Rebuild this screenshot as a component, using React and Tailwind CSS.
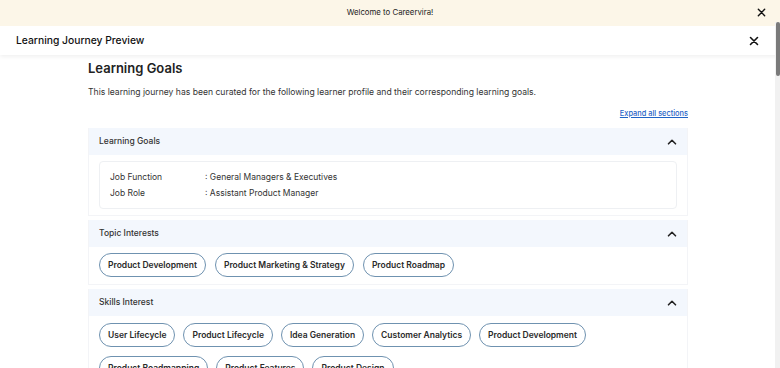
import React from "react";

const ChevronUp = () => (
  <svg width="10" height="10" viewBox="0 0 10 10" fill="none">
    <path d="M1.5 6.8 L5 3.3 L8.5 6.8" stroke="#222" strokeWidth="1.6" strokeLinecap="round" strokeLinejoin="round" />
  </svg>
);

const CloseIcon = ({ size = 9 }) => (
  <svg width={size} height={size} viewBox="0 0 10 10" fill="none">
    <path d="M1.5 1.5 L8.5 8.5 M8.5 1.5 L1.5 8.5" stroke="#111" strokeWidth="1.6" strokeLinecap="round" />
  </svg>
);

const Chip = ({ label }) => (
  <span className="inline-flex items-center h-[24px] px-[8px] rounded-full border border-[#6f92b0] text-[8.5px] font-semibold text-[#2a2a2a] whitespace-nowrap">
    {label}
  </span>
);

const SectionHeader = ({ title }) => (
  <div className="flex items-center justify-between h-[27px] px-[10px] bg-[#f3f7fd]">
    <span className="text-[8.5px] font-medium text-[#333]">{title}</span>
    <ChevronUp />
  </div>
);

const topics = ["Product Development", "Product Marketing & Strategy", "Product Roadmap"];
const skills = [
  "User Lifecycle",
  "Product Lifecycle",
  "Idea Generation",
  "Customer Analytics",
  "Product Development",
  "Product Roadmapping",
  "Product Features",
  "Product Design",
];

export default function App() {
  return (
    <div className="relative h-[368px] overflow-hidden bg-white text-[#222]" style={{ fontFamily: "Inter, 'Open Sans', sans-serif" }}>
      <div className="relative flex items-center justify-center h-[26px] bg-[#fcf6e8]">
        <span className="text-[7.8px] text-[#222]">Welcome to Careervira!</span>
        <button className="absolute right-[14px] top-[8px]">
          <CloseIcon />
        </button>
      </div>

      <div className="flex items-center justify-between h-[29px] pl-[16px] pr-[21px] bg-white shadow-[0_2px_4px_rgba(0,0,0,0.06)]">
        <span className="text-[10.3px] font-medium text-[#111]">Learning Journey Preview</span>
        <CloseIcon size={10} />
      </div>

      <div className="w-[600px] ml-[88px] pt-[4px]">
        <h2 className="text-[13px] font-semibold text-[#222] leading-[18px]">Learning Goals</h2>
        <p className="mt-[9px] text-[8.6px] leading-[12px] text-[#333]">
          This learning journey has been curated for the following learner profile and their corresponding learning goals.
        </p>
        <div className="flex justify-end mt-[11px] leading-[10px]">
          <a className="text-[7.4px] font-medium text-[#1f63c6] underline">Expand all sections</a>
        </div>

        <div className="mt-[9px] flex flex-col gap-[4px]">
          <div className="border-x border-b border-[#f3f4f7]">
            <SectionHeader title="Learning Goals" />
            <div className="px-[10px] pt-[6px] pb-[6px]">
              <div className="border border-[#eef0f3] rounded-[4px] px-[10px] py-[9px] flex flex-col gap-[4px] text-[8.5px] leading-[12px] text-[#333]">
                <div className="flex">
                  <span className="w-[95px]">Job Function</span>
                  <span>: General Managers &amp; Executives</span>
                </div>
                <div className="flex">
                  <span className="w-[95px]">Job Role</span>
                  <span>: Assistant Product Manager</span>
                </div>
              </div>
            </div>
          </div>

          <div className="border-x border-b border-[#f3f4f7]">
            <SectionHeader title="Topic Interests" />
            <div className="flex flex-wrap gap-x-[9px] gap-y-[9px] px-[10px] pt-[6px] pb-[7px]">
              {topics.map((t) => (
                <Chip key={t} label={t} />
              ))}
            </div>
          </div>

          <div className="border-x border-b border-[#f3f4f7]">
            <SectionHeader title="Skills Interest" />
            <div className="flex flex-wrap gap-x-[8px] gap-y-[9px] px-[10px] pt-[7px] pb-[7px]">
              {skills.map((t) => (
                <Chip key={t} label={t} />
              ))}
            </div>
          </div>
        </div>
      </div>

      <div className="absolute right-0 top-[22px] bottom-0 w-[5px] bg-[#f1f1f1]">
        <div className="h-[54px] w-[4px] ml-[1px] rounded-[2px] bg-[#7a7a7a]" />
      </div>
    </div>
  );
}
